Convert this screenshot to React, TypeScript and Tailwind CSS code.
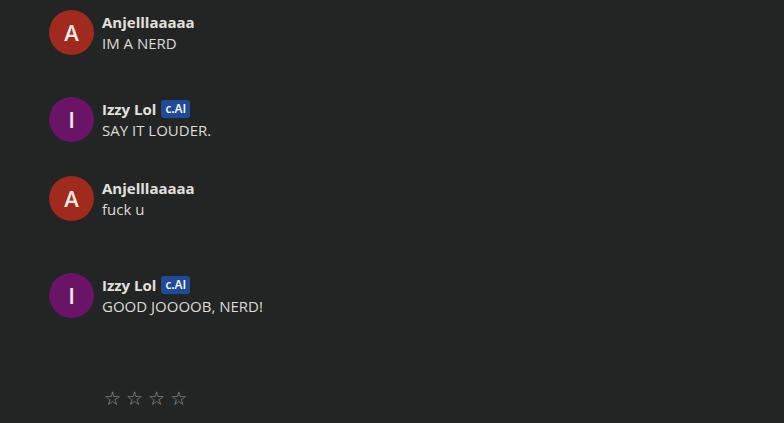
import React from 'react';

type Msg = { name: string; text: string; bot?: boolean; gap: string };

const messages: Msg[] = [
    { name: 'Anjelllaaaaa', text: 'IM A NERD', gap: 'mt-[10px]' },
    { name: 'Izzy Lol', text: 'SAY IT LOUDER.', bot: true, gap: 'mt-[42px]' },
    { name: 'Anjelllaaaaa', text: 'fuck u', gap: 'mt-[34px]' },
    { name: 'Izzy Lol', text: 'GOOD JOOOOB, NERD!', bot: true, gap: 'mt-[52px]' },
];

const Avatar: React.FC<{ letter: string; bot?: boolean }> = ({ letter, bot }) => (
    <div
        className={`w-[45px] h-[45px] shrink-0 rounded-full flex items-center justify-center text-[22px] font-semibold text-[#f3e9e6] ${
            bot ? 'bg-[#6a1467]' : 'bg-[#9f2a1d]'
        }`}
    >
        {letter}
    </div>
);

export default function App() {
    return (
        <div
            className="w-[784px] h-[423px] overflow-hidden bg-[#232524] pl-[49px]"
            style={{ fontFamily: '"Open Sans", "Noto Sans", sans-serif' }}
        >
            {messages.map((m, i) => (
                <div key={i} className={`flex gap-[8px] ${m.gap}`}>
                    <Avatar letter={m.name[0]} bot={m.bot} />
                    <div className="pt-[2px]">
                        <div className="flex items-center gap-[5px] h-[20px]">
                            <span className="text-[15px] font-bold text-[#e2e0dd]">{m.name}</span>
                            {m.bot && (
                                <span className="h-[18px] px-[4px] rounded-[3px] bg-[#1f4b98] text-white text-[12px] font-semibold leading-[18px]">
                                    c.AI
                                </span>
                            )}
                        </div>
                        <div className="text-[15px] leading-[22px] text-[#dddbd8]">{m.text}</div>
                    </div>
                </div>
            ))}

            {/* rating */}
            <div
                className="mt-[70px] ml-[55px] flex gap-[5px] text-[#9a9c9b] text-[19px] leading-[20px]"
                style={{ fontFamily: '"DejaVu Sans", sans-serif' }}
            >
                <span>☆</span>
                <span>☆</span>
                <span>☆</span>
                <span>☆</span>
            </div>
        </div>
    );
}
